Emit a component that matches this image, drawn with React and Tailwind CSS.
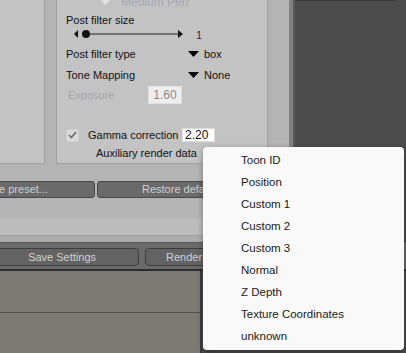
function Tri({ className = "", color = "#000" }) {
  return (
    <svg width="11" height="6" viewBox="0 0 11 6" className={className}>
      <polygon points="0,0 11,0 5.5,6" fill={color} />
    </svg>
  );
}

export default function App() {
  const items = [
    "Toon ID",
    "Position",
    "Custom 1",
    "Custom 2",
    "Custom 3",
    "Normal",
    "Z Depth",
    "Texture Coordinates",
    "unknown",
  ];
  return (
    <div className="relative w-[406px] h-[353px] overflow-hidden bg-[#4b4b4b] font-['Liberation_Sans',Arial,sans-serif] flex flex-col">
      <div className="flex h-[242px]">
        <div className="w-[289px] flex flex-col bg-[#b4b4b4]">
          <div className="flex h-[164px] shrink-0">
            <div className="w-[45px] bg-[#c3c3c3] border-r border-b border-[#a1a1a1]" />
            <div className="w-[11px]" />
            <div className="w-[212px] bg-[#c3c3c3] border-l border-r border-b border-[#a1a1a1] flex flex-col text-[11px] text-[#111]">
              <div className="-mt-[5px] h-[14px] flex items-center pl-[43px]">
                <Tri color="#e2e2e2" />
                <span className="ml-[10px] text-[#a4a7b0] text-[12px]">Medium Pen</span>
              </div>
              <div className="mt-[4px] h-[14px] flex items-center pl-[9px]">
                <span>Post filter size</span>
              </div>
              <div className="mt-[2px] h-[10px] flex items-center pl-[17px]">
                <svg width="110" height="10" viewBox="0 0 110 10">
                  <polygon points="4,1 0,5 4,9" fill="#111" />
                  <line x1="12" y1="5" x2="104" y2="5" stroke="#222" strokeWidth="1" />
                  <circle cx="12" cy="5" r="4" fill="#111" />
                  <polygon points="104,1 109,5 104,9" fill="#111" />
                </svg>
                <span className="ml-[12px] mt-[3px] text-[#4a1848]">1</span>
              </div>
              <div className="mt-[8px] h-[14px] flex items-center pl-[9px]">
                <span className="w-[122px]">Post filter type</span>
                <Tri />
                <span className="ml-[5px]">box</span>
              </div>
              <div className="mt-[7px] h-[14px] flex items-center pl-[9px]">
                <span className="w-[122px]">Tone Mapping</span>
                <Tri />
                <span className="ml-[5px]">None</span>
              </div>
              <div className="mt-[4px] h-[18px] flex items-center pl-[11px]">
                <span className="w-[80px] text-[#a5a5a5]">Exposure</span>
                <div className="w-[34px] h-[18px] bg-[#eeeeee] border border-[#e0e0e0] flex items-center justify-center text-[#8a8a8a] text-[12px]">
                  1.60
                </div>
              </div>
              <div className="mt-[24px] h-[14px] flex items-center pl-[9px]">
                <div className="w-[13px] h-[13px] rounded-[2px] bg-[#d9d9d9] border border-[#cfcfcf] flex items-center justify-center">
                  <svg width="9" height="8" viewBox="0 0 9 8">
                    <polyline points="1,4 3.5,6.5 8,1" fill="none" stroke="#6a6a6a" strokeWidth="1.6" />
                  </svg>
                </div>
                <span className="ml-[9px] w-[94px]">Gamma correction</span>
                <div className="w-[33px] h-[14px] bg-white border border-[#dcdcdc] flex items-center pl-[2px] text-[12px]">
                  2.20
                </div>
              </div>
              <div className="mt-[4px] h-[14px] flex items-center pl-[39px]">
                <span>Auxiliary render data</span>
              </div>
            </div>
          </div>
          <div className="mt-[17px] flex h-[17px] gap-[2px] text-[11px] text-[#d0d0d0]">
            <div className="ml-[-80px] w-[175px] shrink-0 h-[17px] rounded-[3px] bg-[#6a6a6a] border border-[#484848] flex items-center justify-end pr-[46px]">
              Save preset...
            </div>
            <div className="w-[180px] shrink-0 h-[17px] rounded-[3px] bg-[#6a6a6a] border border-[#484848] flex items-center pl-[44px]">
              Restore defaults
            </div>
          </div>
          <div className="mt-[20px] h-[18px] bg-[#bcbcbc] border-b border-[#a0a0a0]" />
          <div className="flex-1 bg-[#acacac]" />
        </div>
        <div className="w-[4px] bg-[#808080]" />
        <div className="flex-1 bg-[#4b4b4b] border-l-2 border-[#5a5a5a]">
          <div className="h-px w-[101px] bg-[#3a3a3a]" />
        </div>
      </div>
      <div className="h-[27px] bg-[#6a6a6a] border-t border-[#565656] flex items-start pt-[5px] gap-[6px] text-[11px] text-[#d2d2d2]">
        <div className="ml-[-12px] w-[151px] shrink-0 h-[18px] rounded-[4px] bg-[#636363] border border-[#3c3c3c] flex items-center justify-end pr-[42px]">
          Save Settings
        </div>
        <div className="w-[150px] shrink-0 h-[18px] rounded-[4px] bg-[#636363] border border-[#3c3c3c] flex items-center pl-[20px]">
          Render
        </div>
      </div>
      <div className="h-[2px] bg-[#2c2c2c]" />
      <div className="flex-1 flex">
        <div className="w-[202px] bg-[#7d7a74] border-r-2 border-[#3c3c3c] flex flex-col">
          <div className="h-[42px] border-b border-[#55524d]" />
          <div className="flex-1" />
        </div>
        <div className="flex-1 bg-[#4b4b4b]" />
      </div>

      <div className="absolute left-[203px] top-[147px] w-[201px] h-[203px] bg-[#f9f9f9] rounded-[4px] shadow-[0_2px_6px_rgba(0,0,0,0.35)] pt-[3px] text-[11.5px] text-[#1a1a1a]">
        {items.map((t) => (
          <div key={t} className="h-[22px] flex items-center pl-[38px]">
            {t}
          </div>
        ))}
      </div>
    </div>
  );
}
